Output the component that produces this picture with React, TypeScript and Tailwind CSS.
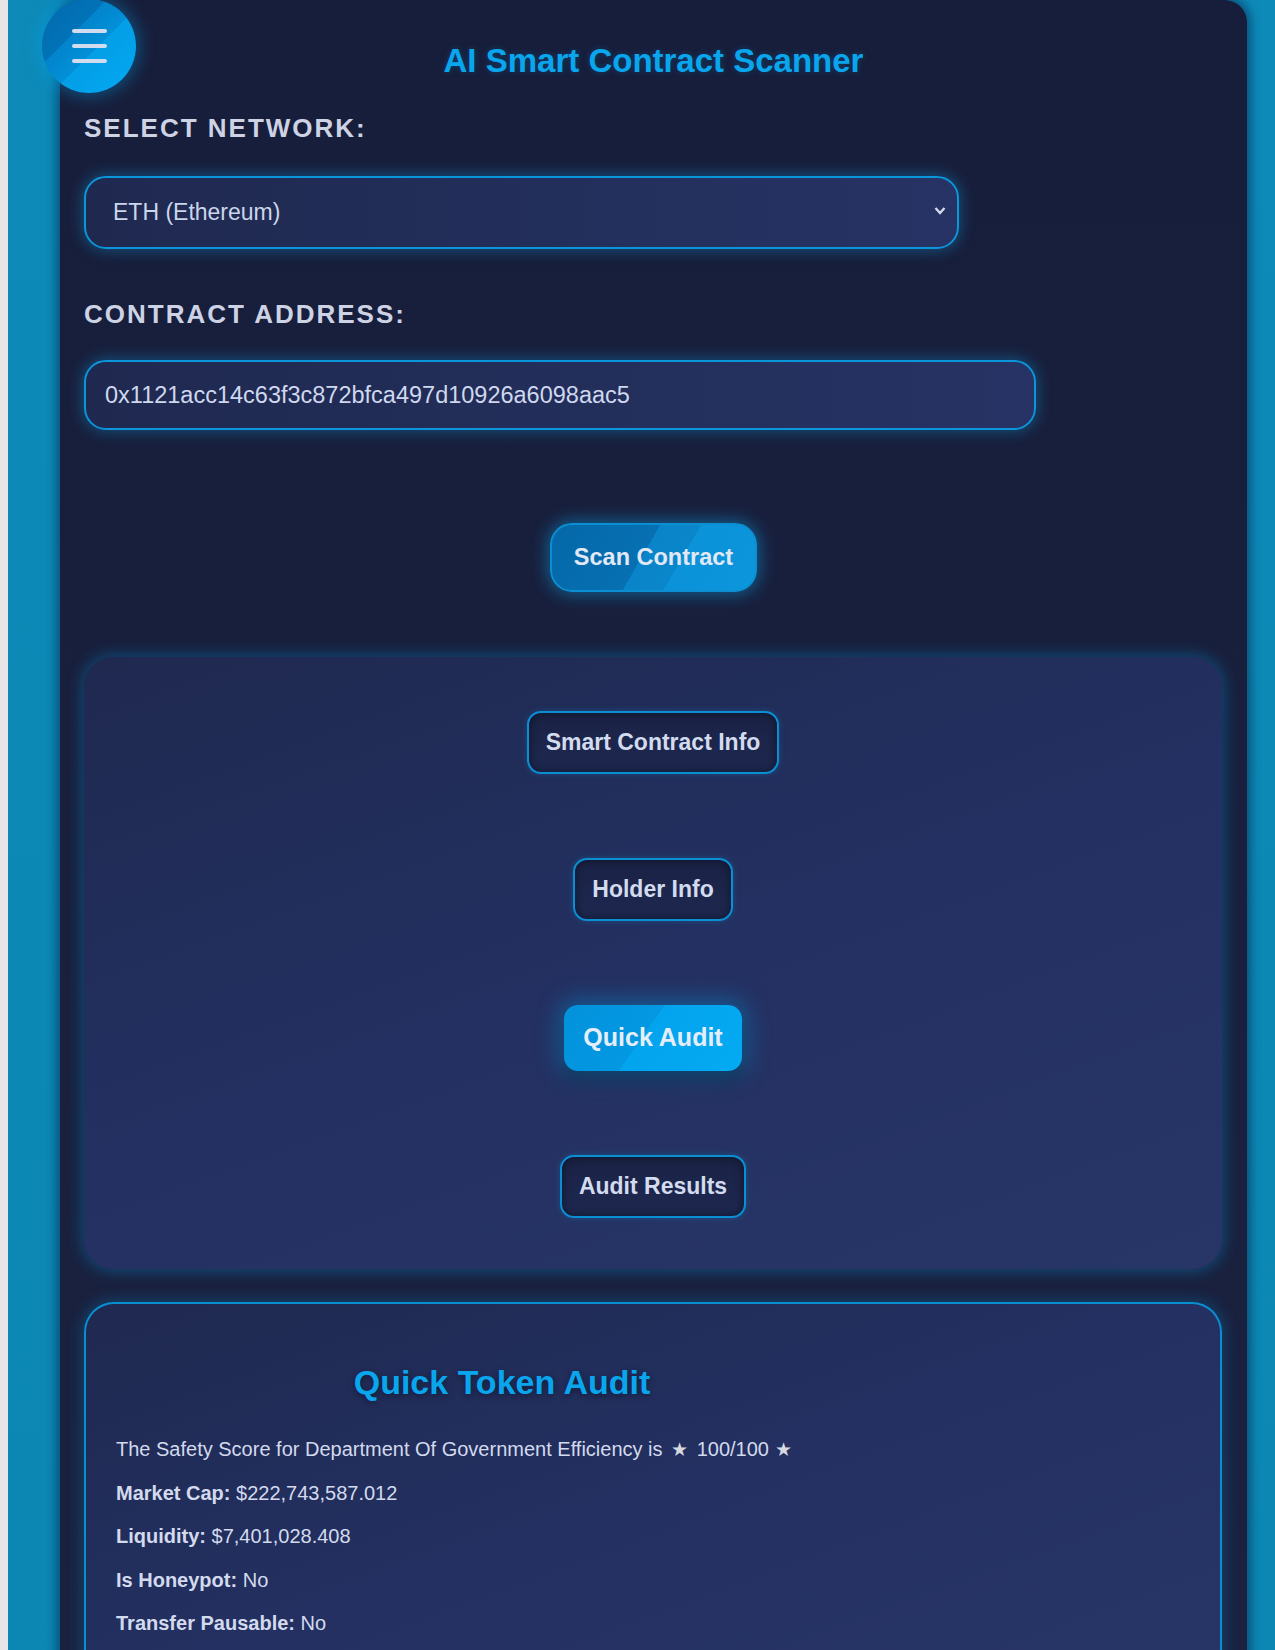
import React from "react";

const font = { fontFamily: '"Liberation Sans", Arial, sans-serif' };

function DarkButton({ label }: { label: string }) {
  return (
    <button
      className="flex h-[63px] items-center rounded-[14px] border-2 border-[#0a8fd4] bg-[linear-gradient(180deg,#1a2245_0%,#1e2850_100%)] px-[17px] text-[23px] font-bold text-[#d3dbef] shadow-[inset_0_0_10px_rgba(0,0,0,0.45),0_0_6px_rgba(14,165,233,0.25)]"
      style={font}
    >
      {label}
    </button>
  );
}

export default function App() {
  return (
    <div className="flex min-h-[1650px] w-[1275px] bg-[#ebe6e8]" style={font}>
      <div className="w-2 shrink-0 bg-[#e9e5e7]" />
      <div className="flex min-h-[1650px] flex-1 bg-[linear-gradient(180deg,#0d8ab8_0%,#0c87b3_100%)] pl-[52px] pr-[28px]">
        <div className="relative flex-1 rounded-t-[22px] bg-[linear-gradient(180deg,#171e3b_0%,#1a2240_100%)] px-[24px] pb-10 shadow-[0_0_10px_4px_rgba(5,40,80,0.55)]">
          {/* hamburger */}
          <div className="absolute left-[-18px] top-[-1px] flex h-[94px] w-[94px] flex-col items-center justify-center gap-[11px] rounded-full bg-[linear-gradient(135deg,#0268ad_0%,#0273b8_35%,#0284cc_35%,#0290d8_55%,#039ee6_55%,#03a9f4_100%)] shadow-[0_0_16px_4px_rgba(3,169,244,0.35)]">
            <span className="block h-[4px] w-[35px] rounded-full bg-[#d2dcef]" />
            <span className="block h-[4px] w-[35px] rounded-full bg-[#d2dcef]" />
            <span className="block h-[4px] w-[35px] rounded-full bg-[#d2dcef]" />
          </div>

          <h1 className="pt-[41px] text-center text-[33px] font-bold leading-[40px] text-[#09a6ee] [text-shadow:0_0_6px_rgba(3,169,244,0.25)]">
            AI Smart Contract Scanner
          </h1>

          <div className="mt-[31px] text-[26px] font-bold uppercase leading-[32px] tracking-[2px] text-[#cdd3e4]">
            Select Network:
          </div>

          <div className="relative mt-[32px] h-[73px] w-[875px]">
            <select
              className="h-full w-full appearance-none rounded-[22px] border-2 border-[#0b95da] bg-[linear-gradient(90deg,#1f2950_0%,#263364_100%)] pl-[27px] text-[23px] text-[#cbd5ec] shadow-[0_0_14px_2px_rgba(14,165,233,0.35)] outline-none"
              style={font}
              defaultValue="eth"
            >
              <option value="eth">ETH (Ethereum)</option>
            </select>
            <svg
              className="pointer-events-none absolute right-[13px] top-[30px]"
              width="12"
              height="9"
              viewBox="0 0 12 9"
            >
              <polyline points="1.5,2 6,7 10.5,2" fill="none" stroke="#d5dbe8" strokeWidth="2.4" />
            </svg>
          </div>

          <div className="mt-[49px] text-[26px] font-bold uppercase leading-[32px] tracking-[2px] text-[#cdd3e4]">
            Contract Address:
          </div>

          <input
            className="mt-[30px] block h-[70px] w-[952px] rounded-[22px] border-2 border-[#0b95da] bg-[linear-gradient(90deg,#1f2950_0%,#263364_100%)] pl-[19px] text-[23.5px] text-[#cfd8ee] shadow-[0_0_14px_2px_rgba(14,165,233,0.35)] outline-none"
            style={font}
            defaultValue="0x1121acc14c63f3c872bfca497d10926a6098aac5"
          />

          <div className="mt-[93px] flex justify-center">
            <button
              className="flex h-[69px] items-center rounded-[22px] border-2 border-[#0b8fd2] bg-[linear-gradient(120deg,#0568a8_0%,#0670b2_45%,#0a84c8_45%,#0a86ca_62%,#0b92d8_62%,#0c96dc_100%)] px-[22px] text-[23.5px] font-bold text-[#e1e8f6] shadow-[0_0_16px_3px_rgba(14,165,233,0.45)]"
              style={font}
            >
              Scan Contract
            </button>
          </div>

          {/* panel 1 */}
          <div className="mt-[65px] flex w-[1138px] flex-col items-center gap-[84px] rounded-[30px] bg-[linear-gradient(160deg,#1f2950_0%,#233061_50%,#283667_100%)] pb-[51px] pt-[54px] shadow-[0_0_14px_3px_rgba(8,120,180,0.45)]">
            <DarkButton label="Smart Contract Info" />
            <DarkButton label="Holder Info" />
            <button
              className="flex h-[66px] items-center rounded-[14px] bg-[linear-gradient(125deg,#0392dc_0%,#0398e2_45%,#03a4ee_45%,#03aaf2_100%)] px-[19px] text-[25px] font-bold text-[#e6edf8] shadow-[0_0_22px_6px_rgba(3,169,244,0.35),0_10px_14px_rgba(0,0,0,0.35)]"
              style={font}
            >
              Quick Audit
            </button>
            <DarkButton label="Audit Results" />
          </div>

          {/* panel 2 */}
          <div className="mt-[33px] w-[1138px] rounded-t-[30px] border-2 border-b-0 border-[#0a8ed2] bg-[linear-gradient(160deg,#1f2950_0%,#233061_50%,#283667_100%)] pb-[40px] pl-[30px] pt-[56px] shadow-[0_0_14px_3px_rgba(8,120,180,0.35)]">
            <h2 className="w-[772px] text-center text-[34px] font-bold leading-[44px] text-[#09a6ee] [text-shadow:0_2px_6px_rgba(0,0,0,0.4)]">
              Quick Token Audit
            </h2>
            <div className="mt-[24px] text-[20px] leading-[43.5px] text-[#d3daee]">
              <p>
                The Safety Score for Department Of Government Efficiency is{" "}
                <span className="mx-[3px] text-[19px] text-[#d8d8e0]">★</span> 100/100{" "}
                <span className="text-[19px] text-[#d8d8e0]">★</span>
              </p>
              <p>
                <span className="font-bold">Market Cap:</span> $222,743,587.012
              </p>
              <p>
                <span className="font-bold">Liquidity:</span> $7,401,028.408
              </p>
              <p>
                <span className="font-bold">Is Honeypot:</span> No
              </p>
              <p>
                <span className="font-bold">Transfer Pausable:</span> No
              </p>
            </div>
          </div>
        </div>
      </div>
    </div>
  );
}
